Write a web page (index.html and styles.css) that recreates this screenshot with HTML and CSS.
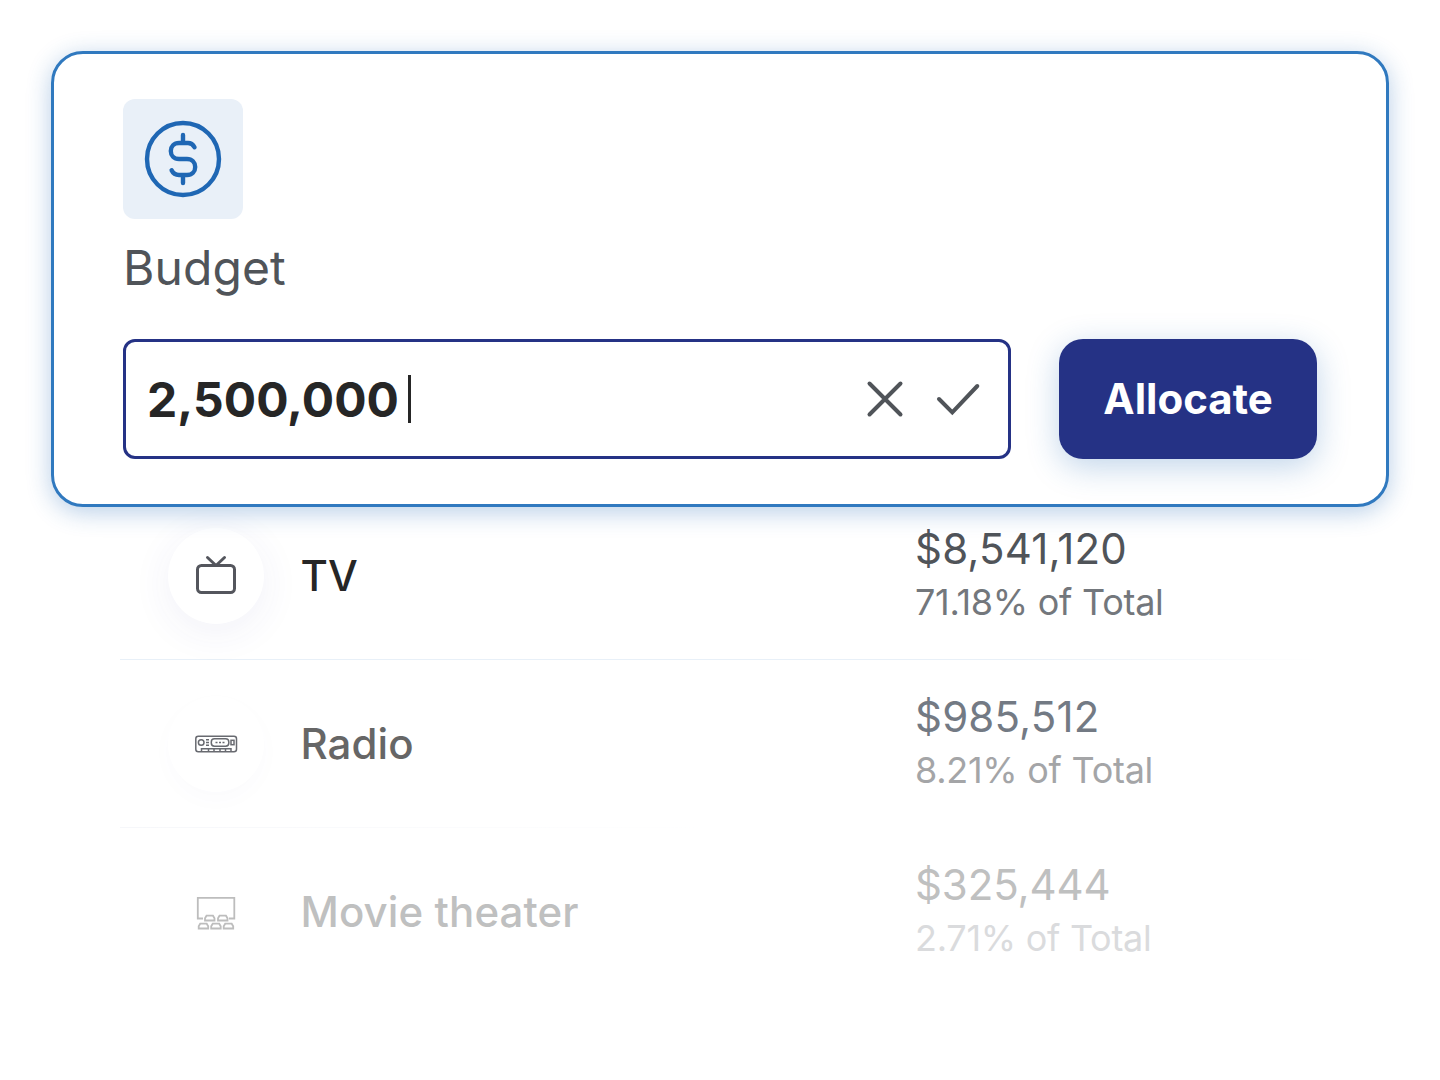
FILE: index.html
```html
<!DOCTYPE html>
<html lang="en">
<head>
<meta charset="utf-8">
<title>Budget allocation</title>
<link rel="stylesheet" href="styles.css">
</head>
<body>
<main class="page">
  <section class="card">
    <div class="tile">
      <svg width="120" height="120" viewBox="0 0 120 120" fill="none" stroke="#1f67b4" stroke-width="4.4" stroke-linecap="round" stroke-linejoin="round">
        <circle cx="60" cy="60" r="36"/>
        <path d="M60 36v8M60 76v8M71.500 48.300C70 45.500 68 44 65 44H56c-5 0-8.200 3.500-8.200 8s3.200 8 8.200 8h8c5 0 8.200 3.500 8.200 8s-3.200 8-8.200 8H56c-3.500 0-6-1.700-7.400-4.700"/>
      </svg>
    </div>
    <label class="label" for="budget">Budget</label>
    <div class="form">
      <div class="field" id="budget">
        <span class="value">2,500,000</span>
        <span class="caret"></span>
        <svg class="actions" width="120" height="48" viewBox="0 0 120 48" fill="none" stroke="#505459" stroke-width="4" stroke-linecap="round">
          <path d="M8.500 8.500l31 31M39.500 8.500l-31 31"/>
          <path d="M78 24l13.300 13.300L116.300 11"/>
        </svg>
      </div>
      <button class="button">Allocate</button>
    </div>
  </section>
  <section class="list">
    <div class="row row-tv">
      <div class="badge">
        <svg width="48" height="48" viewBox="0 0 48 48" fill="none" stroke="#54565d" stroke-width="3" stroke-linecap="round" stroke-linejoin="round">
          <rect x="5.500" y="13.500" width="37" height="27" rx="4"/>
          <path d="M15.500 5.500l8.500 8 8.500-8"/>
        </svg>
      </div>
      <div class="name">TV</div>
      <div class="figures"><div class="amount">$8,541,120</div><div class="share">71.18% of Total</div></div>
    </div>
    <div class="row row-radio">
      <div class="badge">
        <svg width="48" height="48" viewBox="0 0 48 48" fill="none" stroke="#686a70" stroke-width="1.500">
          <rect x="3.800" y="16.300" width="40.700" height="15.400" rx="2.500"/>
          <circle cx="9.200" cy="22.500" r="2.800"/>
          <path d="M14 19.700h3M14 22.500h3M14 25.300h3M23.500 22.500h2M27 22.500h2M30.500 22.500h2M9.500 31v-2.300h29.500V31M16.500 29v2M22 29v2M28 29v2M33.500 29v2"/>
          <rect x="19.300" y="18.800" width="17.500" height="7.400" rx="3.200"/>
          <rect x="39" y="20.300" width="3" height="4.400"/>
        </svg>
      </div>
      <div class="name">Radio</div>
      <div class="figures"><div class="amount">$985,512</div><div class="share">8.21% of Total</div></div>
    </div>
    <div class="row row-theater">
      <div class="badge">
        <svg width="48" height="48" viewBox="0 0 48 48" fill="none" stroke="#bdbdbd" stroke-width="1.800">
          <path d="M11 30.500H5.800V9.800h36.500v20.700H37"/>
          <path d="M13 32.500v-2.300l1.500-2.500h6.500l1.500 2.500v2.300z"/>
          <path d="M26 32.500v-2.300l1.500-2.500H34l1.500 2.500v2.300zM6.700 40.500v-2.300l1.500-2.500h6.500l1.500 2.500v2.300zM19.200 40.500v-2.300l1.500-2.500h6.500l1.500 2.500v2.300zM31.700 40.500v-2.300l1.500-2.500h6.500l1.500 2.500v2.300z"/>
        </svg>
      </div>
      <div class="name">Movie theater</div>
      <div class="figures"><div class="amount">$325,444</div><div class="share">2.71% of Total</div></div>
    </div>
  </section>
</main>
</body>
</html>
```
FILE: styles.css
```css
* { box-sizing: border-box; }
body { margin: 0; background: #fff; font-family: Inter, "Liberation Sans", sans-serif; }
.page { height: 1080px; padding: 51px; overflow: hidden; }
.card {
  position: relative;
  z-index: 1;
  height: 456px;
  padding: 45px 69px;
  border: 3px solid #3079bf;
  border-radius: 32px;
  background: #fff;
  box-shadow: 0 5px 24px rgba(31, 103, 180, .32);
}
.tile { width: 120px; height: 120px; border-radius: 12px; background: #e9f0f8; }
.tile svg, .badge svg { display: block; }
.label { display: block; height: 60px; margin: 19px 0 41px; font-size: 48px; line-height: 60px; letter-spacing: .1px; color: #505459; }
.form { display: flex; gap: 48px; }
.field {
  display: flex;
  align-items: center;
  width: 888px;
  height: 120px;
  padding: 0 27px 0 21px;
  border: 3px solid #253285;
  border-radius: 12px;
}
.value { font-size: 48px; font-weight: 700; letter-spacing: .03px; color: #262626; }
.caret { width: 3px; height: 48px; margin-left: 9px; background: #262626; }
.actions { margin-left: auto; }
.button {
  width: 258px;
  height: 120px;
  padding: 0 0 2px;
  border: 0;
  border-radius: 24px;
  background: #253285;
  color: #fff;
  font: 700 42px Inter, "Liberation Sans", sans-serif;
  letter-spacing: 0;
  box-shadow: 0 8px 32px rgba(31, 103, 180, .28);
}
.list { margin: -15px 69px 0; }
.row { display: flex; align-items: center; height: 168px; padding-left: 48px; border-bottom: 1px solid transparent; }
.badge { display: flex; align-items: center; justify-content: center; width: 96px; height: 96px; border-radius: 50%; background: #fff; }
.name { width: 614.5px; margin-left: 36.5px; font-size: 42px; font-weight: 500; letter-spacing: .1px; }
.figures { white-space: nowrap; }
.amount { margin-bottom: 2px; font-size: 42px; line-height: 51px; letter-spacing: .18px; }
.share { font-size: 36px; line-height: 53px; letter-spacing: -.27px; }
.row-tv { border-image: linear-gradient(90deg, #e8f0f8 75%, #fff) 1; }
.row-tv .badge { box-shadow: 0 8px 40px rgba(50, 60, 160, .07); }
.row-tv .name { color: #262626; }
.row-tv .amount { color: #505459; }
.row-tv .share { color: #73777c; }
.row-radio { border-image: linear-gradient(90deg, #f6f7fa, #fff 50%) 1; }
.row-radio .badge { box-shadow: 0 8px 24px rgba(50, 60, 160, .02); }
.row-radio .name { color: #666; }
.row-radio .amount { color: #737a84; }
.row-radio .share { color: #a4a5a7; }
.row-theater .name, .row-theater .amount { color: #bfc0c0; }
.row-theater .amount { letter-spacing: -.1px; }
.row-theater .share { color: #dadbdd; }
```
